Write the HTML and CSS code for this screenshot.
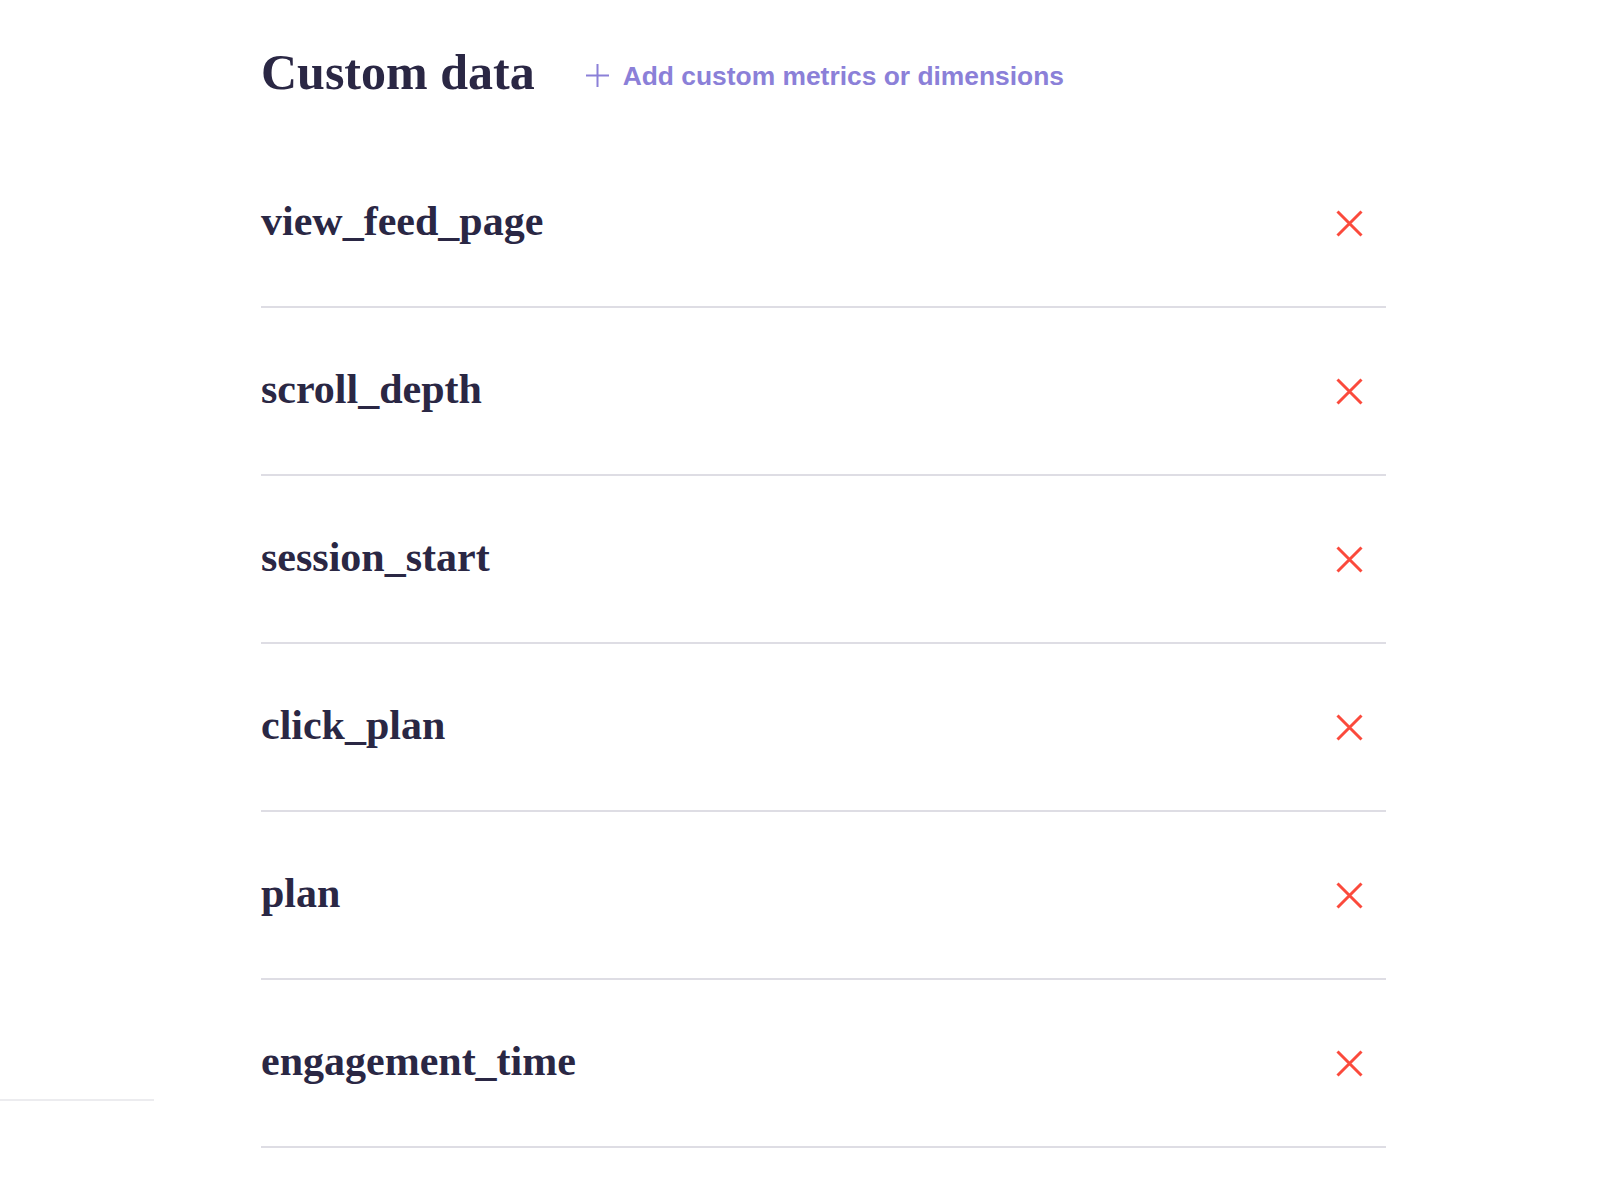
FILE: index.html
```html
<!DOCTYPE html>
<html lang="en">
<head>
<meta charset="utf-8">
<title>Custom data</title>
<link rel="stylesheet" href="styles.css">
</head>
<body>
<div class="page">
  <aside class="sidebar">
    <div class="sidebar-block"></div>
  </aside>
  <main class="content">
    <header class="header">
      <h1 class="title">Custom data</h1>
      <a class="add-link" href="#">
        <svg class="plus" width="23" height="23" viewBox="0 0 23 23" aria-hidden="true">
          <path d="M11.5 0 V23 M0 11.5 H23" stroke="currentColor" stroke-width="2" fill="none"/>
        </svg>
        <span>Add custom metrics or dimensions</span>
      </a>
    </header>
    <ul class="list">
      <li class="row"><span class="name">view_feed_page</span><button class="remove" aria-label="Remove"><svg width="27" height="27" viewBox="0 0 27 27"><path d="M1.5 1.5 L25.5 25.5 M25.5 1.5 L1.5 25.5" stroke="currentColor" stroke-width="3" fill="none"/></svg></button></li>
      <li class="row"><span class="name">scroll_depth</span><button class="remove" aria-label="Remove"><svg width="27" height="27" viewBox="0 0 27 27"><path d="M1.5 1.5 L25.5 25.5 M25.5 1.5 L1.5 25.5" stroke="currentColor" stroke-width="3" fill="none"/></svg></button></li>
      <li class="row"><span class="name">session_start</span><button class="remove" aria-label="Remove"><svg width="27" height="27" viewBox="0 0 27 27"><path d="M1.5 1.5 L25.5 25.5 M25.5 1.5 L1.5 25.5" stroke="currentColor" stroke-width="3" fill="none"/></svg></button></li>
      <li class="row"><span class="name">click_plan</span><button class="remove" aria-label="Remove"><svg width="27" height="27" viewBox="0 0 27 27"><path d="M1.5 1.5 L25.5 25.5 M25.5 1.5 L1.5 25.5" stroke="currentColor" stroke-width="3" fill="none"/></svg></button></li>
      <li class="row"><span class="name">plan</span><button class="remove" aria-label="Remove"><svg width="27" height="27" viewBox="0 0 27 27"><path d="M1.5 1.5 L25.5 25.5 M25.5 1.5 L1.5 25.5" stroke="currentColor" stroke-width="3" fill="none"/></svg></button></li>
      <li class="row"><span class="name">engagement_time</span><button class="remove" aria-label="Remove"><svg width="27" height="27" viewBox="0 0 27 27"><path d="M1.5 1.5 L25.5 25.5 M25.5 1.5 L1.5 25.5" stroke="currentColor" stroke-width="3" fill="none"/></svg></button></li>
    </ul>
  </main>
</div>
</body>
</html>
```
FILE: styles.css
```css
html, body {
  margin: 0;
  padding: 0;
  background: #ffffff;
}

.page {
  display: flex;
  align-items: flex-start;
  min-height: 1196px;
}

.sidebar {
  width: 154px;
  flex: none;
}

.sidebar-block {
  height: 1099px;
  border-bottom: 2px solid #ececef;
}

.content {
  width: 1125px;
  margin-left: 107px;
  flex: none;
}

.header {
  display: flex;
  align-items: center;
  height: 49px;
  margin-top: 48px;
  margin-bottom: 43px;
}

.title {
  margin: 0;
  font-family: "Liberation Serif", serif;
  font-weight: 700;
  font-size: 50px;
  line-height: 49px;
  color: #2a2744;
}

.add-link {
  display: flex;
  align-items: center;
  gap: 14px;
  margin-left: 51px;
  margin-top: 6px;
  font-family: "Liberation Sans", Arial, sans-serif;
  font-weight: 700;
  font-size: 26.4px;
  line-height: 30px;
  color: #8b80d8;
  text-decoration: none;
}

.plus {
  display: block;
  flex: none;
}

.list {
  list-style: none;
  margin: 0;
  padding: 0;
}

.row {
  display: flex;
  align-items: center;
  justify-content: space-between;
  box-sizing: border-box;
  height: 168px;
  border-bottom: 2px solid #dedde4;
}

.name {
  margin-bottom: 4px;
  font-family: "Liberation Serif", serif;
  font-weight: 700;
  font-size: 42px;
  line-height: 42px;
  color: #2a2744;
}

.remove {
  display: block;
  margin: 0 23px 0 0;
  padding: 0;
  border: 0;
  background: none;
  color: #fb4a3c;
  cursor: pointer;
}

.remove svg {
  display: block;
}
```
